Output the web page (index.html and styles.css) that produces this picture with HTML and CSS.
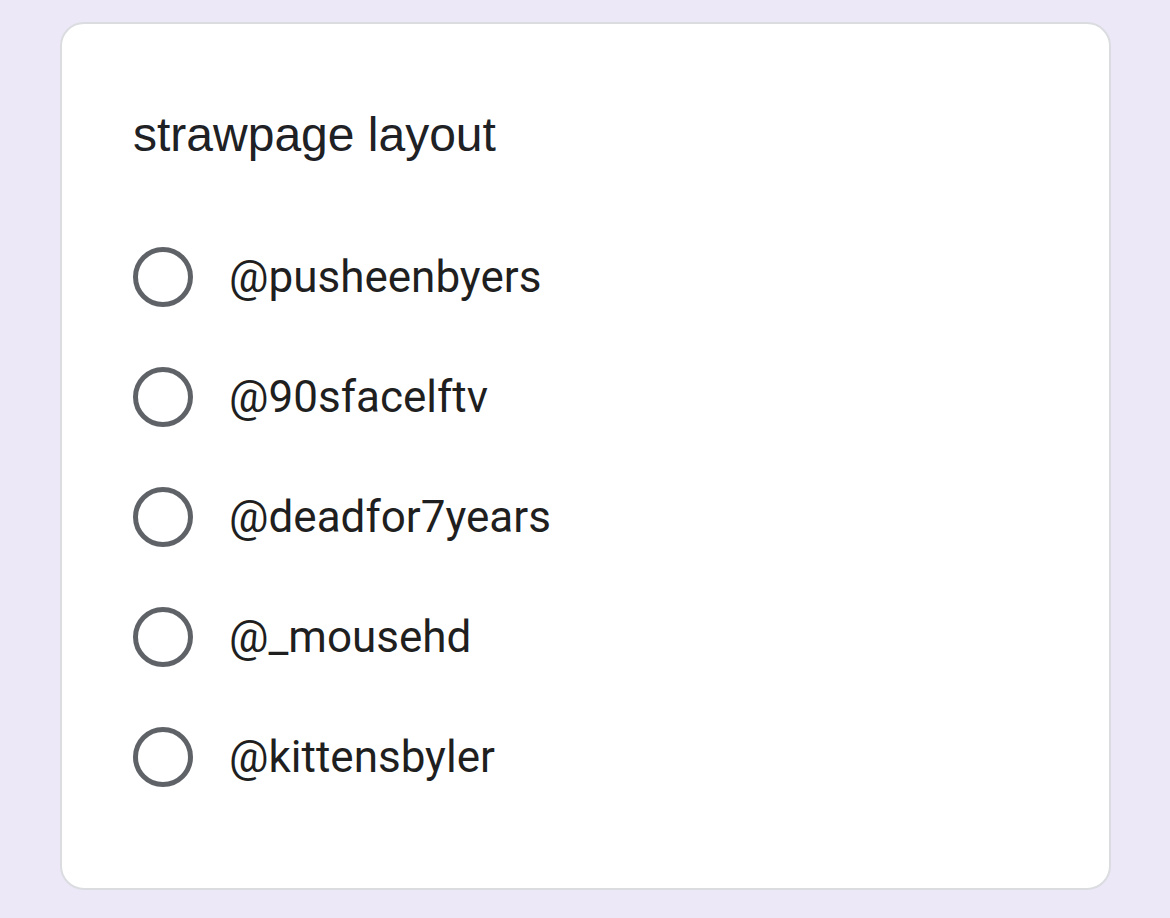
FILE: index.html
```html
<!DOCTYPE html>
<html>
<head>
<meta charset="utf-8">
<link rel="stylesheet" href="styles.css">
</head>
<body>
<div class="card">
  <div class="title">strawpage layout</div>
  <div class="options">
    <div class="option"><span class="radio"></span><span class="label">@pusheenbyers</span></div>
    <div class="option"><span class="radio"></span><span class="label">@90sfacelftv</span></div>
    <div class="option"><span class="radio"></span><span class="label">@deadfor7years</span></div>
    <div class="option"><span class="radio"></span><span class="label">@_mousehd</span></div>
    <div class="option"><span class="radio"></span><span class="label">@kittensbyler</span></div>
  </div>
</div>
</body>
</html>
```
FILE: styles.css
```css
html, body {
  margin: 0;
  padding: 0;
}
body {
  background: #ede8f7;
  width: 1170px;
  height: 918px;
  overflow: hidden;
  padding-top: 22px;
  box-sizing: border-box;
}
.card {
  margin-left: 60px;
  width: 1051px;
  height: 868px;
  box-sizing: border-box;
  background: #ffffff;
  border: 2px solid #dadce0;
  border-radius: 24px;
  padding: 83px 0 0 71px;
}
.title {
  font-family: "Liberation Sans", Arial, sans-serif;
  font-size: 48px;
  line-height: 56px;
  color: #202124;
}
.options {
  margin-top: 54px;
  display: flex;
  flex-direction: column;
}
.option {
  height: 120px;
  display: flex;
  align-items: center;
  gap: 36px;
}
.radio {
  width: 60px;
  height: 60px;
  box-sizing: border-box;
  border: 5.5px solid #5f6368;
  border-radius: 50%;
  flex: none;
}
.label {
  font-family: Roboto, "Noto Sans", sans-serif;
  font-size: 44px;
  color: #1f1f1f;
}
```
